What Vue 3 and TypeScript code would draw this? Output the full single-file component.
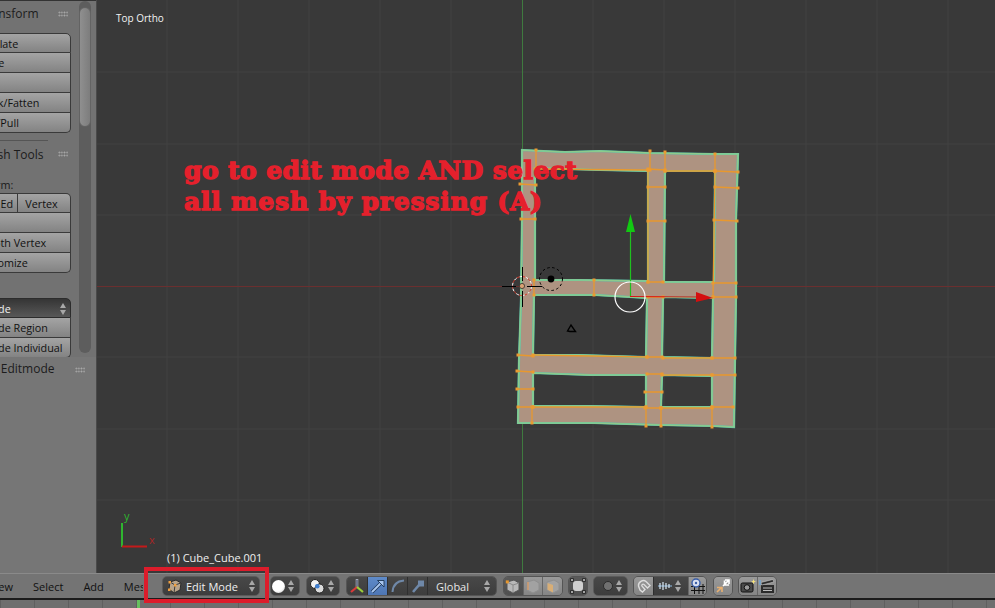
<template>
  <div class="blender">
    <div class="main">
      <aside class="sidebar">
        <div class="tools">
          <div class="tools-content">
            <div class="panel-head first">
              <span>Transform</span>
              <i class="grip"></i>
            </div>
            <div class="btn-col">
              <button v-for="t in transformOps" :key="t" class="btn">{{ t }}</button>
            </div>
            <div class="panel-sep"></div>
            <div class="panel-head">
              <span>Mesh Tools</span>
              <i class="grip"></i>
            </div>
            <div class="field-label">Deform:</div>
            <div class="btn-col">
              <div class="btn-row">
                <button class="btn slide">Slide Ed</button>
                <button class="btn vertex">Vertex</button>
              </div>
              <button v-for="t in deformOps" :key="t" class="btn">{{ t }}</button>
            </div>
            <div class="btn-col extrude">
              <button class="btn dark">Extrude<span class="arrows"></span></button>
              <button class="btn">Extrude Region</button>
              <button class="btn">Extrude Individual</button>
            </div>
          </div>
          <div class="scroll-track"><div class="scroll-thumb"></div></div>
        </div>
        <div class="op-panel">
          <span>Toggle Editmode</span>
          <i class="grip"></i>
        </div>
      </aside>

      <section class="viewport">
        <svg class="scene" viewBox="97 0 898 573" width="898" height="573">
          <g stroke="#424242" stroke-width="1">
            <line v-for="x in gridX" :key="'x' + x" :x1="x" y1="0" :x2="x" y2="573" />
            <line v-for="y in gridY" :key="'y' + y" x1="97" :y1="y" x2="995" :y2="y" />
          </g>
          <line x1="97" y1="286.5" x2="995" y2="286.5" stroke="#6b2f2f" />
          <line x1="522.5" y1="0" x2="522.5" y2="573" stroke="#3f7a3f" />

          <path :d="meshPath" fill="#ae9381" fill-rule="evenodd" stroke="#55c4b4" stroke-width="2.2" />
          <path :d="meshPath" fill="none" stroke="#8ccb8c" stroke-width="1.6" />
          <g stroke="#e8982e" stroke-width="1.3" stroke-linecap="round">
            <line v-for="(s, i) in edges" :key="'e' + i" :x1="s[0]" :y1="s[1]" :x2="s[2]" :y2="s[3]" />
          </g>
          <g fill="#eb9a30">
            <template v-for="(s, i) in edges" :key="'v' + i">
              <rect :x="s[0] - 1.5" :y="s[1] - 1.5" width="3" height="3" />
              <rect :x="s[2] - 1.5" :y="s[3] - 1.5" width="3" height="3" />
            </template>
          </g>

          <!-- manipulator -->
          <line x1="630.5" y1="297" x2="630.5" y2="232" stroke="#1fc11f" stroke-width="1.2" />
          <polygon points="630.5,214 626,232 635,232" fill="#12c912" />
          <line x1="630" y1="296.5" x2="698" y2="297" stroke="#d81515" stroke-width="1.2" />
          <polygon points="696,292 713,298 696,302" fill="#d40f0f" />
          <circle cx="630" cy="297" r="15" fill="none" stroke="#ffffff" stroke-width="1.2" />

          <!-- 3d cursor -->
          <circle cx="522" cy="286" r="9.5" fill="none" stroke="#ffffff" stroke-dasharray="3 3" />
          <circle cx="522" cy="286" r="9.5" fill="none" stroke="#d83a2a" stroke-dasharray="3 3" stroke-dashoffset="3" />
          <g stroke="#000000">
            <line x1="502" y1="286.5" x2="516" y2="286.5" />
            <line x1="527" y1="286.5" x2="542" y2="286.5" />
            <line x1="522.5" y1="267" x2="522.5" y2="281" />
            <line x1="522.5" y1="291" x2="522.5" y2="307" />
          </g>
          <circle cx="522" cy="286" r="2.6" fill="#d9a273" stroke="#222222" stroke-width="0.7" />

          <!-- pivot / lamp -->
          <circle cx="551" cy="279" r="11.5" fill="none" stroke="#000000" stroke-dasharray="2.5 2.5" />
          <circle cx="551" cy="279" r="3.4" fill="#000000" />
          <path d="M567.5 331 L571 325 L575.5 331.5 L570 331.5 Z" fill="none" stroke="#000000" stroke-width="1.4" />

          <!-- axis widget -->
          <line x1="122" y1="547" x2="122" y2="523" stroke="#2fb52f" stroke-width="2" />
          <line x1="122" y1="546.5" x2="147" y2="546.5" stroke="#c41a1a" stroke-width="2" />
        </svg>
        <span class="axis-label y">y</span>
        <span class="axis-label x">x</span>
        <span class="view-name">Top Ortho</span>
        <span class="object-name">(1) Cube_Cube.001</span>
        <p class="note">go to edit mode AND select<br /><span class="note-second">all mesh by pressing (A)</span></p>
      </section>
    </div>

    <header class="bar">
      <nav class="menus">
        <span class="m-view">View</span>
        <span>Select</span>
        <span>Add</span>
        <span class="m-mesh">Mesh</span>
      </nav>
      <div class="drop mode">
        <svg class="ico" viewBox="0 0 16 16">
          <path d="M3 4 L9 2 L14 5 L13 12 L7 15 L2 11 Z" fill="#b9a48a" stroke="#2c2c2c" />
          <path d="M3 4 L8 7 L14 5 M8 7 L7 15" fill="none" stroke="#3b3b3b" />
          <g fill="#f0a040">
            <rect x="1.5" y="3" width="2.5" height="2.5" />
            <rect x="7" y="6" width="2.5" height="2.5" />
            <rect x="1" y="10.5" width="2.5" height="2.5" />
          </g>
        </svg>
        <span class="drop-label">Edit Mode</span>
        <span class="arrows"></span>
      </div>
      <div class="drop shade">
        <span class="sphere"></span>
        <span class="arrows"></span>
      </div>
      <div class="drop pivot">
        <svg class="ico" viewBox="0 0 16 16">
          <circle cx="6" cy="6" r="4.5" fill="#f2f2f2" stroke="#222" />
          <circle cx="10.5" cy="10.5" r="4.5" fill="#dcdcdc" stroke="#222" />
          <circle cx="8.3" cy="8.3" r="2.3" fill="#3f7fd0" />
        </svg>
        <span class="arrows"></span>
      </div>
      <div class="group manip">
        <span class="cell">
          <svg class="ico" viewBox="0 0 16 16">
            <line x1="8" y1="9" x2="8" y2="1" stroke="#dfe3ea" stroke-width="2.4" />
            <line x1="8" y1="9" x2="8" y2="1.5" stroke="#27304e" stroke-width="1.2" />
            <line x1="8" y1="9" x2="2" y2="14" stroke="#d83a3a" stroke-width="2.2" />
            <line x1="8" y1="9" x2="14" y2="14" stroke="#9ccf3a" stroke-width="2.2" />
          </svg>
        </span>
        <span class="cell active">
          <svg class="ico" viewBox="0 0 16 16">
            <path d="M2 14 L11 5" stroke="#1d3555" stroke-width="3.4" fill="none" />
            <path d="M2 14 L11 5" stroke="#a9c6ee" stroke-width="2" fill="none" />
            <path d="M7.5 2.5 H14 V9 Z" fill="#a9c6ee" stroke="#1d3555" stroke-width="0.9" />
          </svg>
        </span>
        <span class="cell">
          <svg class="ico" viewBox="0 0 16 16">
            <path d="M2.5 14 C3 7 7 3 14 2.5" stroke="#6f88a8" stroke-width="2" fill="none" />
          </svg>
        </span>
        <span class="cell">
          <svg class="ico" viewBox="0 0 16 16">
            <path d="M3 14 L9 7" stroke="#6f88a8" stroke-width="2.6" fill="none" />
            <rect x="8" y="2.5" width="6" height="6" fill="#6f88a8" />
          </svg>
        </span>
        <span class="cell global">Global<span class="arrows"></span></span>
      </div>
      <div class="group select-modes">
        <span class="cell dim">
          <svg class="ico" viewBox="0 0 16 16">
            <path d="M2 4 L9 2 L14 5 V12 L8 15 L2 12 Z" fill="#b9b9b9" stroke="#555" />
            <path d="M2 4 L8 7 L14 5 M8 7 V15" fill="none" stroke="#8a8a8a" />
            <rect x="0.8" y="2.4" width="3" height="3" fill="#e8982e" />
          </svg>
        </span>
        <span class="cell light">
          <svg class="ico" viewBox="0 0 16 16">
            <path d="M2 4 L9 2 L14 5 V12 L8 15 L2 12 Z" fill="#a2a2a2" stroke="#8e8e8e" />
            <line x1="3" y1="4" x2="3" y2="12" stroke="#d69a66" stroke-width="1.4" />
          </svg>
        </span>
        <span class="cell light">
          <svg class="ico" viewBox="0 0 16 16">
            <path d="M2 4 L9 2 L14 5 V12 L8 15 L2 12 Z" fill="#a2a2a2" stroke="#8e8e8e" />
            <path d="M2.5 5 L8 7 V14.5 L2.5 11.8 Z" fill="#d8ae76" />
          </svg>
        </span>
      </div>
      <div class="group occlude">
        <span class="cell dim">
          <svg class="ico" viewBox="0 0 16 16">
            <rect x="3" y="3" width="10" height="10" rx="3" fill="#cfcfcf" />
            <g fill="#ffffff" stroke="#000" stroke-width="0.8">
              <rect x="0.8" y="0.8" width="2.4" height="2.4" />
              <rect x="12.8" y="0.8" width="2.4" height="2.4" />
              <rect x="0.8" y="12.8" width="2.4" height="2.4" />
              <rect x="12.8" y="12.8" width="2.4" height="2.4" />
            </g>
          </svg>
        </span>
      </div>
      <div class="drop prop">
        <span class="dot"></span>
        <span class="arrows"></span>
      </div>
      <div class="group snap">
        <span class="cell light magnet">
          <svg class="ico" viewBox="0 0 16 16">
            <path d="M4 12 L2.5 8 C2 4 7 1 10 3.5 L14 7.5 L11.5 10 L8 6.5 C6.8 5.6 5.2 6.8 6 8.2 L9 11.5 L6.5 14 Z" fill="none" stroke="#dddddd" stroke-width="1.4" />
          </svg>
        </span>
        <span class="cell snap-el">
          <svg class="ico" viewBox="0 0 16 16">
            <line x1="1" y1="8" x2="15" y2="8" stroke="#8fc0ea" stroke-width="1" />
            <path d="M3 5 V11 M6 4 V12 M9 5 V11 M12 6 V10" stroke="#dbe9f5" stroke-width="1.2" />
          </svg>
          <span class="arrows"></span>
        </span>
        <span class="cell light grid-cell">
          <svg class="ico" viewBox="0 0 16 16">
            <path d="M1 8.5 H15 M1 12.5 H15 M4.5 6 V16 M9 6 V16 M13 6 V16" stroke="#111" stroke-width="1" />
            <circle cx="6" cy="5" r="4" fill="#d8dff0" stroke="#3a5ea8" stroke-width="1.4" />
            <circle cx="6" cy="5" r="1.2" fill="#3a5ea8" />
          </svg>
        </span>
      </div>
      <div class="group layer">
        <span class="cell light">
          <svg class="ico" viewBox="0 0 16 16">
            <path d="M8 8 L14 2 M10 2 H14 V6 M9.5 2.5 V7 H14" stroke="#fff" stroke-width="1.6" fill="none" />
            <path d="M2 14 L7 9 M2 9.5 H7 V14" stroke="#e8b070" stroke-width="1.6" fill="none" />
          </svg>
        </span>
      </div>
      <div class="group render">
        <span class="cell light">
          <svg class="ico" viewBox="0 0 16 16">
            <rect x="1" y="5" width="12" height="9" rx="1.5" fill="#4a4a4a" stroke="#111" />
            <circle cx="7" cy="9.5" r="2.8" fill="#9a9a9a" stroke="#111" />
            <path d="M13.5 1 L14.2 3 L16 3.6 L14.2 4.3 L13.5 6.3 L12.8 4.3 L11 3.6 L12.8 3 Z" fill="#f6e27a" />
          </svg>
        </span>
        <span class="cell light">
          <svg class="ico" viewBox="0 0 16 16">
            <rect x="2" y="7" width="13" height="8" fill="#2b2b2b" />
            <path d="M2 4.5 L14 1.5 L14.8 4 L2.6 7 Z" fill="#2b2b2b" stroke="#ddd" stroke-width="0.5" />
            <path d="M4 10 H13 M4 12.5 H13" stroke="#bdbdbd" />
            <path d="M1 2 V7" stroke="#6fa8d8" stroke-width="1.4" />
          </svg>
        </span>
      </div>
    </header>

    <footer class="timeline">
      <i class="playhead"></i>
    </footer>

    <div class="callout"></div>
  </div>
</template>

<script setup lang="ts">
const transformOps = ['Translate', 'Rotate', 'Scale', 'Shrink/Fatten', 'Push/Pull']
const deformOps = ['Noise', 'Smooth Vertex', 'Randomize']

const gridX = [167, 238, 309, 380, 451, 593, 664, 735, 806, 877, 948]
const gridY = [72, 144, 215, 357, 429, 500]

// mesh outline followed by its six holes
const loops: number[][][] = [
  [[522, 150], [565, 152], [600, 151], [650, 153], [715, 154], [738, 154], [736, 220], [736, 296], [735, 360], [734, 427], [712, 426], [660, 425], [593, 423], [518, 423], [519, 360], [521, 300], [522, 220]],
  [[535, 168], [600, 170], [648, 171], [648, 281], [580, 280], [535, 280]],
  [[665, 171], [715, 171], [714, 282], [664, 282]],
  [[534, 295], [595, 295], [647, 298], [646, 357], [580, 355], [533, 355]],
  [[663, 297], [713, 298], [712, 358], [662, 357]],
  [[533, 373], [590, 375], [646, 375], [646, 407], [590, 406], [533, 406]],
  [[662, 375], [712, 376], [712, 407], [661, 407]],
]

const meshPath = loops
  .map((loop) => 'M' + loop.map((p) => p.join(' ')).join(' L') + ' Z')
  .join(' ')

const edges: number[][] = [
  [536, 150, 536, 169], [520, 184, 536, 185], [521, 219, 535, 219], [535, 169, 648, 170],
  [650, 151, 650, 170], [665, 152, 665, 171], [715, 154, 715, 171], [715, 171, 738, 172],
  [715, 187, 738, 188], [714, 220, 737, 221], [713, 283, 736, 283], [713, 297, 736, 297],
  [648, 169, 665, 170], [648, 187, 665, 187], [648, 221, 665, 221], [648, 282, 663, 282],
  [648, 297, 663, 297], [594, 280, 594, 295], [534, 280, 534, 295], [648, 170, 648, 282],
  [715, 171, 713, 297], [665, 171, 715, 171], [518, 355, 533, 356], [517, 371, 533, 372],
  [517, 389, 533, 389], [518, 407, 533, 407], [647, 357, 662, 357], [647, 374, 662, 374],
  [645, 392, 662, 392], [645, 408, 661, 408], [712, 358, 735, 358], [712, 375, 735, 375],
  [712, 407, 733, 407], [532, 407, 532, 423], [646, 407, 646, 426], [661, 408, 661, 426],
  [712, 407, 712, 427], [533, 355, 647, 357], [662, 375, 712, 375], [533, 407, 646, 407],
  [661, 408, 712, 408], [663, 358, 712, 358],
]
</script>

<style scoped>
.blender {
  position: relative;
  width: 995px;
  height: 608px;
  overflow: hidden;
  display: flex;
  flex-direction: column;
  font-family: "Open Sans", "Noto Sans", sans-serif;
  font-size: 11px;
  color: #111;
  background: #727272;
}
button {
  font: inherit;
  color: inherit;
}
.main {
  display: flex;
  height: 573px;
  flex: none;
}
.sidebar {
  width: 97px;
  flex: none;
  display: flex;
  flex-direction: column;
  overflow: hidden;
  background: #727272;
  border-right: 1px solid #4a4a4a;
  box-sizing: border-box;
}
.tools {
  height: 357px;
  flex: none;
  display: flex;
  overflow: hidden;
  border-top: 1px solid #333;
  box-sizing: border-box;
}
.tools-content {
  width: 99px;
  flex: none;
  margin-left: -28px;
  font-size: 10.8px;
}
.panel-head {
  height: 26px;
  display: flex;
  align-items: center;
  justify-content: space-between;
  padding: 0 3px 0 8px;
  font-size: 12px;
  color: #1c1c1c;
}
.panel-head.first {
  padding-bottom: 1px;
  box-sizing: border-box;
}
.grip {
  width: 10px;
  height: 6px;
  flex: none;
  background-image: radial-gradient(#a8a8a8 0.7px, transparent 1px);
  background-size: 2.6px 3px;
}
.btn-col {
  display: flex;
  flex-direction: column;
  margin-top: 6px;
  border-radius: 5px;
}
.btn {
  height: 20px;
  flex: none;
  padding: 0;
  text-align: left;
  text-indent: -1.5px;
  white-space: nowrap;
  overflow: hidden;
  border: 1px solid #3a3a3a;
  border-top-width: 0;
  background: linear-gradient(#a4a4a4, #838383);
  color: #111;
  position: relative;
}
.btn-col > .btn:first-child,
.btn-row:first-child .btn {
  border-top-width: 1px;
}
.btn-col > .btn:last-child {
  border-bottom-right-radius: 5px;
}
.btn-col > :first-child,
.btn-row:first-child .vertex {
  border-top-right-radius: 5px;
}
.btn-row {
  display: flex;
  height: 20px;
}
.slide {
  width: 46px;
  padding-right: 4px;
  box-sizing: border-box;
  text-align: right;
  text-indent: 0;
}
.vertex {
  flex: 1;
  border-left: 0;
  padding-right: 5px;
  text-align: center;
  text-indent: 0;
}
.dark {
  background: linear-gradient(#353535, #585858);
  color: #f0f0f0;
  border-color: #2c2c2c;
}
.panel-sep {
  margin: 7px 23px 0 0;
  height: 1px;
  background: #555;
}
.field-label {
  margin-top: 9px;
  height: 17px;
  line-height: 17px;
  color: #1a1a1a;
}
.field-label + .btn-col {
  margin-top: 0;
}
.extrude {
  margin-top: 25px;
}
.arrows {
  display: inline-flex;
  flex-direction: column;
  gap: 2px;
  width: 7px;
  flex: none;
}
.arrows::before,
.arrows::after {
  content: "";
  width: 0;
  height: 0;
  border-left: 3.5px solid transparent;
  border-right: 3.5px solid transparent;
}
.arrows::before {
  border-bottom: 5px solid #a8a8a8;
}
.arrows::after {
  border-top: 5px solid #a8a8a8;
}
.dark .arrows {
  position: absolute;
  right: 3px;
  top: 4px;
}
.scroll-track {
  width: 12px;
  height: 352px;
  flex: none;
  margin-left: 8px;
  padding-top: 6px;
  box-sizing: border-box;
  background: #5d5d5d;
  border-radius: 6px;
}
.scroll-thumb {
  height: 120px;
  border-radius: 6px;
  background: linear-gradient(90deg, #8f8f8f, #7d7d7d);
  border: 1px solid #636363;
  box-sizing: border-box;
}
.op-panel {
  flex: 1;
  display: flex;
  justify-content: space-between;
  align-items: flex-start;
  margin-left: -39px;
  padding: 3px 11px 0 0;
  font-size: 12px;
  line-height: 18px;
  color: #1c1c1c;
  background: #767676;
  white-space: nowrap;
}
.op-panel .grip {
  margin-top: 7px;
}
.viewport {
  position: relative;
  flex: 1;
  background: #393939;
  overflow: hidden;
}
.scene {
  display: block;
  position: absolute;
  inset: 0;
}
.view-name,
.object-name,
.axis-label,
.note {
  position: absolute;
  margin: 0;
  white-space: nowrap;
}
.view-name {
  left: 19px;
  top: 11px;
  font-size: 10px;
  color: #f2f2f2;
}
.object-name {
  left: 70px;
  top: 550px;
  color: #efefef;
}
.axis-label.y {
  left: 27px;
  top: 508px;
  color: #2fb52f;
}
.axis-label.x {
  left: 52px;
  top: 532px;
  color: #a82626;
}
.note {
  left: 87px;
  top: 155px;
  font-family: "DejaVu Serif", "Liberation Serif", serif;
  font-weight: 700;
  font-size: 25px;
  letter-spacing: 0.4px;
  line-height: 31px;
  color: #e5202c;
  -webkit-text-stroke: 1.3px #e5202c;
}
.note-second {
  letter-spacing: 0.8px;
}
.bar {
  height: 24px;
  flex: none;
  display: flex;
  align-items: center;
  border-top: 1px solid #8a8a8a;
  border-bottom: 2px solid #1c1c1c;
  background: #747474;
  box-sizing: content-box;
}
.menus {
  display: flex;
  gap: 20px;
  width: 143px;
  flex: none;
  overflow: hidden;
  white-space: nowrap;
  color: #111;
}
.m-view {
  margin-left: -11px;
}
.drop {
  height: 20px;
  display: flex;
  align-items: center;
  background: linear-gradient(#484848, #3d3d3d);
  border: 1px solid #5b5b5b;
  border-radius: 5px;
  box-sizing: border-box;
  flex: none;
}
.ico {
  width: 16px;
  height: 16px;
  display: block;
  flex: none;
}
.mode {
  width: 98px;
  margin-left: 19px;
  padding: 0 3px 0 4px;
  color: #f0f0f0;
}
.drop-label {
  flex: 1;
  margin-left: 3px;
}
.shade {
  width: 30px;
  margin-left: 10px;
  padding: 0 4px 0 1px;
  justify-content: space-between;
}
.sphere {
  width: 13px;
  height: 13px;
  border-radius: 50%;
  background: radial-gradient(circle at 40% 35%, #fff 55%, #bbb);
}
.pivot {
  width: 34px;
  margin-left: 6px;
  padding: 0 4px 0 2px;
  justify-content: space-between;
}
.group {
  display: flex;
  height: 20px;
  flex: none;
  border: 1px solid #555;
  border-radius: 5px;
  overflow: hidden;
  box-sizing: border-box;
}
.cell {
  width: 20px;
  flex: none;
  display: flex;
  align-items: center;
  justify-content: center;
  background: linear-gradient(#484848, #3d3d3d);
  border-left: 1px solid #2f2f2f;
  box-sizing: border-box;
}
.cell:first-child {
  border-left: 0;
}
.cell.active {
  background: linear-gradient(#5f8bc9, #4e76b4);
}
.cell.dim {
  background: linear-gradient(#5a5a5a, #4f4f4f);
}
.cell.light {
  background: linear-gradient(#9a9a9a, #858585);
  border-left-color: #666;
}
.manip {
  margin-left: 6px;
}
.global {
  width: 69px;
  justify-content: space-between;
  padding: 0 5px 0 8px;
  color: #e6e6e6;
}
.select-modes {
  width: 60px;
  margin-left: 6px;
}
.select-modes .cell,
.render .cell {
  flex: 1;
  width: auto;
}
.occlude {
  width: 20px;
  margin-left: 5px;
}
.occlude .cell,
.layer .cell {
  flex: 1;
  width: auto;
}
.prop {
  width: 35px;
  margin-left: 5px;
  padding: 0 4px 0 9px;
  justify-content: space-between;
}
.dot {
  width: 10px;
  height: 10px;
  border-radius: 50%;
  background: #707070;
  border: 1px solid #2b2b2b;
  box-sizing: border-box;
}
.snap {
  width: 74px;
  margin-left: 5px;
}
.magnet {
  width: 19px;
}
.snap-el {
  width: 35px;
  gap: 2px;
  padding: 0 3px 0 0;
}
.grid-cell {
  width: 18px;
}
.layer {
  width: 20px;
  margin-left: 6px;
}
.render {
  width: 39px;
  margin-left: 5px;
}
.timeline {
  flex: 1;
  position: relative;
  background-color: #6e6e6e;
  background-image: repeating-linear-gradient(90deg, #5f5f5f 0 1px, transparent 1px 34px);
}
.playhead {
  position: absolute;
  left: 137px;
  top: 0;
  bottom: 0;
  width: 3px;
  background: #67c05f;
}
/* red annotation drawn on top of the screenshot */
.callout {
  position: absolute;
  left: 144px;
  top: 567px;
  width: 125px;
  height: 36px;
  border: 4px solid #dc1c2b;
  box-sizing: border-box;
}
</style>
